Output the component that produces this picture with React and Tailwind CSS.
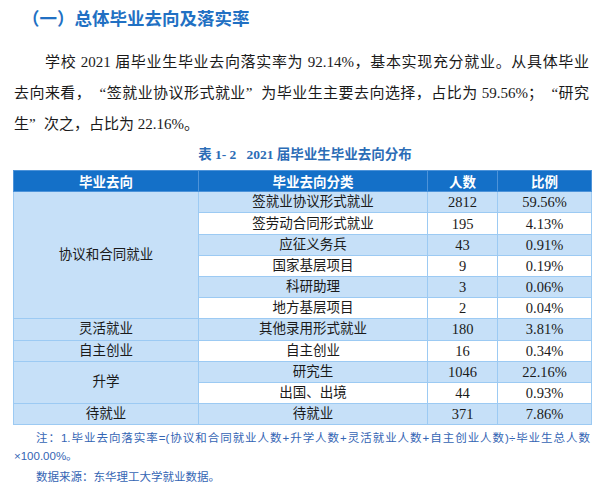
const rows = [
  { group: '协议和合同就业', span: 6, type: '签就业协议形式就业', count: '2812', pct: '59.56%' },
  { type: '签劳动合同形式就业', count: '195', pct: '4.13%' },
  { type: '应征义务兵', count: '43', pct: '0.91%' },
  { type: '国家基层项目', count: '9', pct: '0.19%' },
  { type: '科研助理', count: '3', pct: '0.06%' },
  { type: '地方基层项目', count: '2', pct: '0.04%' },
  { group: '灵活就业', span: 1, type: '其他录用形式就业', count: '180', pct: '3.81%' },
  { group: '自主创业', span: 1, type: '自主创业', count: '16', pct: '0.34%' },
  { group: '升学', span: 2, type: '研究生', count: '1046', pct: '22.16%' },
  { type: '出国、出境', count: '44', pct: '0.93%' },
  { group: '待就业', span: 1, type: '待就业', count: '371', pct: '7.86%' },
];

const serif = { fontFamily: '"Liberation Serif", "Noto Sans CJK SC", serif' };

// full-width quote marks like the Song typeface in the source
function Q({ children, open }) {
  return (
    <span
      className={
        open
          ? 'inline-block w-[15px] text-right [text-align-last:right]'
          : 'inline-block w-[15px] text-left [text-align-last:left]'
      }
    >
      {children}
    </span>
  );
}

export default function App() {
  return (
    <div lang="zh-CN" className="w-[610px] h-[495px] bg-white overflow-hidden text-[#1a1a1a]" style={serif}>
      <div
        className="pl-[22px] pt-[6px] text-[17.5px] leading-[24px] font-bold text-[#2170c3]"
        style={{ fontFamily: '"Noto Sans CJK SC", sans-serif' }}
      >
        （一）总体毕业去向及落实率
      </div>

      <div className="mt-[16.5px] pl-[14px] pr-[21px] text-[15px] leading-[31px]">
        <div className="pl-[31px] text-justify [text-align-last:justify]">
          学校 2021 届毕业生毕业去向落实率为 92.14%，基本实现充分就业。从具体毕业
        </div>
        <div className="text-justify [text-align-last:justify]">
          去向来看，<Q open>“</Q>签就业协议形式就业<Q>”</Q>为毕业生主要去向选择，占比为 59.56%；<Q open>“</Q>研究
        </div>
        <div>生<Q>”</Q>次之，占比为 22.16%。</div>
      </div>

      <div className="mt-[5.5px] text-center text-[13.5px] leading-[20px] font-bold text-[#2b6cb6]">
        表 1- 2&nbsp;&nbsp;&nbsp;2021 届毕业生毕业去向分布
      </div>

      <div className="mt-[5px] pl-[13px]">
        <table className="w-[578px] border-collapse table-fixed text-[13.5px] text-center">
          <colgroup>
            <col className="w-[185px]" />
            <col className="w-[229px]" />
            <col className="w-[70px]" />
            <col className="w-[94px]" />
          </colgroup>
          <thead>
            <tr className="h-[21px] bg-[#1470c8] text-white" style={{ fontFamily: '"Noto Sans CJK SC", sans-serif' }}>
              <th className="border border-[#4d93d9] p-0 font-bold">毕业去向</th>
              <th className="border border-[#4d93d9] p-0 font-bold">毕业去向分类</th>
              <th className="border border-[#4d93d9] p-0 font-bold">人数</th>
              <th className="border border-[#4d93d9] p-0 font-bold">比例</th>
            </tr>
          </thead>
          <tbody>
            {rows.map((r, i) => {
              const bg = i % 2 === 0 ? 'bg-[#c6e0f8]' : 'bg-white';
              return (
                <tr key={r.type + i} className="h-[21.2px] leading-[18px]">
                  {r.group && (
                    <td rowSpan={r.span} className="border border-[#9ccaf3] bg-[#c6e0f8] p-0">
                      {r.group}
                    </td>
                  )}
                  <td className={`border border-[#9ccaf3] p-0 ${bg}`}>{r.type}</td>
                  <td className={`border border-[#9ccaf3] p-0 text-[14.5px] ${bg}`}>{r.count}</td>
                  <td className={`border border-[#9ccaf3] p-0 text-[14.5px] ${bg}`}>{r.pct}</td>
                </tr>
              );
            })}
          </tbody>
        </table>
      </div>

      <div
        className="mt-[4px] pl-[14px] pr-[20px] text-[11.5px] leading-[18px] text-[#3465b4]"
        style={{ fontFamily: '"Liberation Sans", "Noto Sans CJK SC", sans-serif' }}
      >
        <div className="pl-[22px] text-justify [text-align-last:justify]">
          注：1.毕业去向落实率=(协议和合同就业人数+升学人数+灵活就业人数+自主创业人数)÷毕业生总人数
        </div>
        <div>×100.00%。</div>
        <div className="mt-[3px] pl-[22px]">数据来源：东华理工大学就业数据。</div>
      </div>
    </div>
  );
}
